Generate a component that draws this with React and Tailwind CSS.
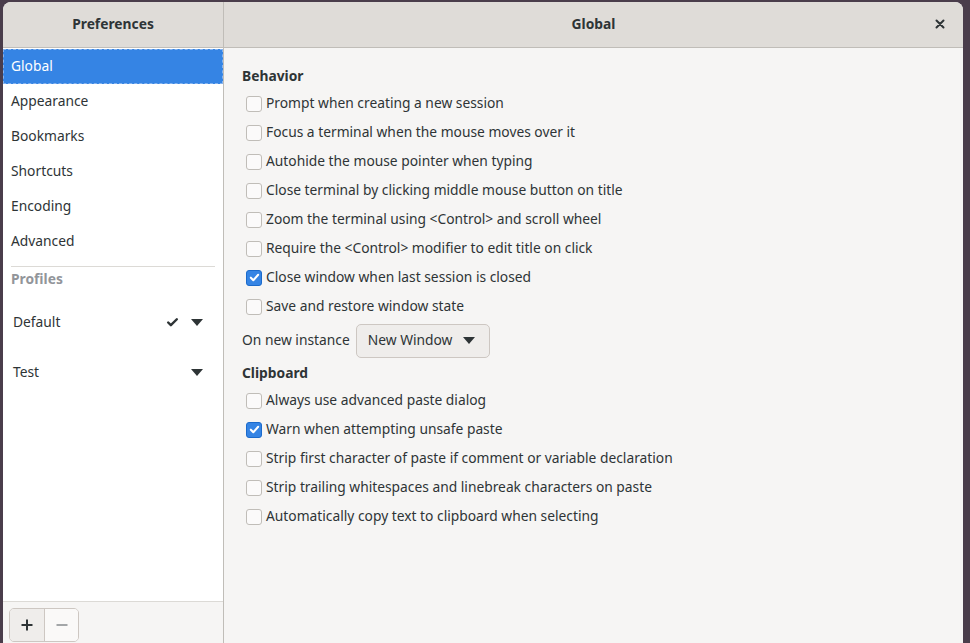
import { Check } from 'lucide-react';

const behavior = [
  ['Prompt when creating a new session', false],
  ['Focus a terminal when the mouse moves over it', false],
  ['Autohide the mouse pointer when typing', false],
  ['Close terminal by clicking middle mouse button on title', false],
  ['Zoom the terminal using <Control> and scroll wheel', false],
  ['Require the <Control> modifier to edit title on click', false],
  ['Close window when last session is closed', true],
  ['Save and restore window state', false],
];

const clipboard = [
  ['Always use advanced paste dialog', false],
  ['Warn when attempting unsafe paste', true],
  ['Strip first character of paste if comment or variable declaration', false],
  ['Strip trailing whitespaces and linebreak characters on paste', false],
  ['Automatically copy text to clipboard when selecting', false],
];

const pages = ['Global', 'Appearance', 'Bookmarks', 'Shortcuts', 'Encoding', 'Advanced'];

function Caret() {
  return (
    <svg width="12" height="7" viewBox="0 0 12 7">
      <path d="M0 0h12L6 7z" fill="#2e3436" />
    </svg>
  );
}

function CheckRow({ label, checked }) {
  return (
    <div className="flex items-center h-[29px] pl-[4px]">
      {checked ? (
        <div className="w-[16px] h-[16px] rounded-[3px] bg-[#3584e4] border border-[#1b6acb] flex items-center justify-center">
          <svg width="11" height="11" viewBox="0 0 12 12">
            <path d="M2 6.2l2.7 2.8L10 3" fill="none" stroke="white" strokeWidth="2.2" strokeLinecap="round" strokeLinejoin="round" />
          </svg>
        </div>
      ) : (
        <div className="w-[16px] h-[16px] rounded-[3px] bg-[#fbfafa] border border-[#c0bdb8]" />
      )}
      <span className="ml-[4px]">{label}</span>
    </div>
  );
}

export default function App() {
  return (
    <div
      className="w-[970px] h-[643px] bg-[#4a3d4b] overflow-hidden text-[#2e3436] text-[13.8px]"
      style={{ fontFamily: '"Noto Sans", sans-serif' }}
    >
      <div className="ml-[3px] mt-[2px] w-[960px] h-[641px] rounded-t-[8px] overflow-hidden flex flex-col bg-[#f6f5f4]">
        {/* Header */}
        <div className="h-[46px] flex bg-[#dfdcd8] border-b border-[#c0bdb8] shrink-0">
          <div className="w-[221px] border-r border-[#c0bdb8] flex items-center justify-center font-bold pb-[1px]">
            Preferences
          </div>
          <div className="flex-1 flex items-center justify-center font-bold relative pb-[1px]">
            Global
            <svg className="absolute right-[18px] top-[17px]" width="10" height="10" viewBox="0 0 10 10">
              <path d="M1.5 1.5l7 7M8.5 1.5l-7 7" stroke="#2e3436" strokeWidth="2" strokeLinecap="round" />
            </svg>
          </div>
        </div>

        <div className="flex flex-1 min-h-0">
          {/* Sidebar */}
          <div className="w-[221px] border-r border-[#c0bdb8] flex flex-col shrink-0">
            <div className="flex-1 bg-white pt-[1px]">
              {pages.map((p, i) => (
                <div
                  key={p}
                  className={`h-[35px] flex items-center ${
                    i === 0 ? 'bg-[#3584e4] text-white border border-dashed border-[#86b4ef] pl-[7px]' : 'pl-[8px]'
                  }`}
                >
                  {p}
                </div>
              ))}
              <div className="mx-[8px] mt-[7px] border-t border-[#dcdad6]" />
              <div className="pl-[8px] pt-[2px] h-[24px] font-bold text-[#92959a]">Profiles</div>
              <div className="h-[50px] mt-[6px] flex items-center pl-[10px] pr-[20px]">
                <span className="flex-1">Default</span>
                <Check size={13} strokeWidth={4.5} className="mr-[12px]" />
                <Caret />
              </div>
              <div className="h-[50px] flex items-center pl-[10px] pr-[20px]">
                <span className="flex-1">Test</span>
                <Caret />
              </div>
            </div>
            <div className="h-[42px] border-t border-[#dcdad6] bg-[#f6f5f4] flex items-start pt-[6px] pl-[6px] shrink-0">
              <div className="flex h-[34px] w-[70px] border border-[#cdc7c2] rounded-[5px] overflow-hidden">
                <div className="w-[35px] bg-[#efedeb] border-r border-[#cdc7c2] flex items-center justify-center">
                  <svg width="12" height="12" viewBox="0 0 12 12">
                    <path d="M6 0.5v11M0.5 6h11" stroke="#2e3436" strokeWidth="2" />
                  </svg>
                </div>
                <div className="flex-1 bg-[#faf9f8] flex items-center justify-center">
                  <svg width="12" height="2" viewBox="0 0 12 2">
                    <path d="M0.5 1h11" stroke="#a3a6a8" strokeWidth="2" />
                  </svg>
                </div>
              </div>
            </div>
          </div>

          {/* Main */}
          <div className="flex-1 pl-[18px] pt-[15px]">
            <div className="font-bold h-[26px] flex items-center">Behavior</div>
            {behavior.map(([l, c]) => (
              <CheckRow key={l} label={l} checked={c} />
            ))}
            <div className="flex items-center h-[39px]">
              <span>On new instance</span>
              <div className="ml-[6px] h-[34px] w-[134px] rounded-[5px] border border-[#cdc7c2] bg-[#efedeb] flex items-center pl-[11px] pr-[14px] justify-between">
                <span>New Window</span>
                <Caret />
              </div>
            </div>
            <div className="font-bold h-[26px] flex items-center">Clipboard</div>
            {clipboard.map(([l, c]) => (
              <CheckRow key={l} label={l} checked={c} />
            ))}
          </div>
        </div>
      </div>
    </div>
  );
}
